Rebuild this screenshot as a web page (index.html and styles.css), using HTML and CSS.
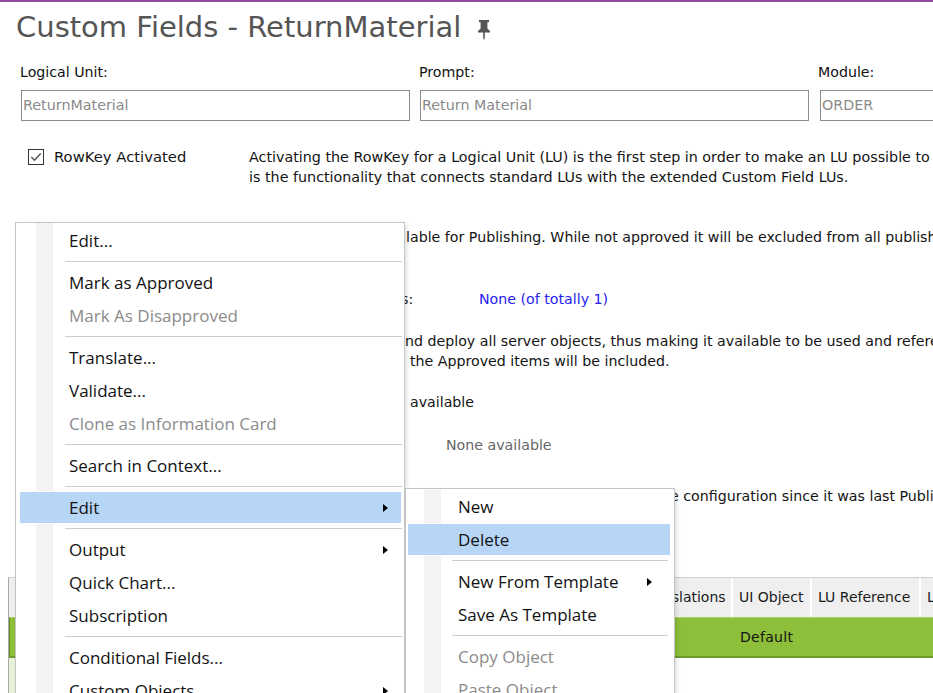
FILE: index.html
```html
<!DOCTYPE html>
<html lang="en">
<head>
<meta charset="utf-8">
<title>Custom Fields - ReturnMaterial</title>
<link rel="stylesheet" href="styles.css">
</head>
<body>
<div class="topline"></div>
<header class="title-row">
  <h1 class="title">Custom Fields - ReturnMaterial</h1>
  <svg class="pin" width="14" height="20" viewBox="0 0 14 20"><path d="M2 0h10v2.2h-1.6v6.3L13 11v1.6H1V11l2.6-2.5V2.2H2z M6.2 12.6h1.6V18L7 20l-0.8-2z" fill="#555"/></svg>
</header>

<div class="fields">
  <div class="field"><label>Logical Unit:</label><div class="input">ReturnMaterial</div></div>
  <div class="field"><label>Prompt:</label><div class="input">Return Material</div></div>
  <div class="field"><label>Module:</label><div class="input input-mod">ORDER</div></div>
</div>

<div class="rowkey">
  <div class="check">
    <svg class="box" width="16" height="16" viewBox="0 0 16 16"><rect x="0.5" y="0.5" width="15" height="15" fill="#fff" stroke="#333"/><polyline points="3.3,8 6.5,11.2 12.7,4.6" fill="none" stroke="#555" stroke-width="1.5"/></svg>
    <span>RowKey Activated</span>
  </div>
  <p class="desc">Activating the RowKey for a Logical Unit (LU) is the first step in order to make an LU possible to extend with Custom Fields. The RowKey<br>is the functionality that connects standard LUs with the extended Custom Field LUs.</p>
</div>

<section class="details">
  <div class="drow r1"><span class="cut w386"><span>An Approved Custom Field is considered stable and therefore avai</span></span><span>lable for Publishing. While not approved it will be excluded from all publishing operations.</span></div>
  <div class="drow r2"><span class="cut w381"><span>Approved Item</span></span><span class="lblend">s:</span><span class="link">None (of totally 1)</span></div>
  <div class="drow r3"><span class="cut w385"><span>Publishing will generate a</span></span><span>nd deploy all server objects, thus making it available to be used and referenced in the application.</span></div>
  <div class="drow"><span class="cut w384"><span>Note that only</span></span><span class="gap6">the Approved items will be included.</span></div>
  <div class="drow r5"><span class="cut w384"><span>None</span></span><span class="gap6">available</span></div>
  <div class="drow r6"><span class="cut w384"><span>Deployed Objects:</span></span><span class="muted">None available</span></div>
  <div class="drow r7"><span class="cut w650"><span>Publish Status: There are changes made to th</span></span><span>e configuration since it was last Published.</span></div>
</section>

<div class="grid">
  <div class="hc c0"></div>
  <div class="hc">Attribute Name</div>
  <div class="hc">Prompt</div>
  <div class="hc">Translations</div>
  <div class="hc">UI Object</div>
  <div class="hc">LU Reference</div>
  <div class="hc">LU Type</div>

  <div class="dc c0 sel"></div>
  <div class="dc"></div>
  <div class="dc"></div>
  <div class="dc"></div>
  <div class="dc">Default</div>
  <div class="dc"></div>
  <div class="dc"></div>

  <div class="fc c0"></div>
  <div class="fc"></div>
  <div class="fc"></div>
  <div class="fc"></div>
  <div class="fc"></div>
  <div class="fc"></div>
  <div class="fc"></div>
</div>

<div class="menu main">
  <div class="mi">Edit...</div>
  <div class="sep"></div>
  <div class="mi">Mark as Approved</div>
  <div class="mi dis">Mark As Disapproved</div>
  <div class="sep"></div>
  <div class="mi">Translate...</div>
  <div class="mi">Validate...</div>
  <div class="mi dis">Clone as Information Card</div>
  <div class="sep"></div>
  <div class="mi">Search in Context...</div>
  <div class="sep"></div>
  <div class="mi hl"><span>Edit</span><span class="arrow"></span></div>
  <div class="sep"></div>
  <div class="mi"><span>Output</span><span class="arrow"></span></div>
  <div class="mi">Quick Chart...</div>
  <div class="mi">Subscription</div>
  <div class="sep"></div>
  <div class="mi">Conditional Fields...</div>
  <div class="mi"><span>Custom Objects</span><span class="arrow"></span></div>
</div>

<div class="menu sub">
  <div class="mi">New</div>
  <div class="mi hl">Delete</div>
  <div class="sep"></div>
  <div class="mi"><span>New From Template</span><span class="arrow"></span></div>
  <div class="mi">Save As Template</div>
  <div class="sep"></div>
  <div class="mi dis">Copy Object</div>
  <div class="mi dis">Paste Object</div>
</div>
</body>
</html>
```

FILE: styles.css
```css
* { box-sizing: border-box; }
html, body { margin: 0; padding: 0; }
body {
  width: 933px;
  height: 693px;
  overflow: hidden;
  position: relative;
  background: #fff;
  font-family: "DejaVu Sans", sans-serif;
  font-size: 14px;
  color: #141414;
}

.topline { height: 2px; background: #8e4a9c; }

.title-row {
  display: flex;
  align-items: flex-start;
  gap: 16px;
  margin: 8px 0 0 16px;
  height: 34px;
}
.title {
  margin: 0;
  font-weight: normal;
  font-size: 29px;
  line-height: 34px;
  color: #555;
  white-space: nowrap;
}
.pin { margin-top: 10px; flex: none; }

.fields {
  display: grid;
  grid-template-columns: 390px 390px 390px;
  column-gap: 9px;
  padding-left: 20px;
  margin-top: 19px;
}
.field label { display: block; height: 18px; line-height: 18px; color: #111; font-size: 14.2px; }
.input {
  margin: 9px 0 0 1px;
  width: 389px;
  height: 31px;
  border: 1px solid #8c8c8c;
  color: #8a8a8a;
  font-size: 14.3px;
  line-height: 29px;
  padding-left: 1px;
  white-space: nowrap;
  overflow: hidden;
}
.input-mod { margin-left: 2px; }

.rowkey { display: flex; margin-top: 26px; }
.check {
  display: flex;
  align-items: flex-start;
  gap: 10px;
  width: 249px;
  padding-left: 28px;
  line-height: 20px;
  font-size: 14.8px;
  flex: none;
}
.check .box { margin-top: 2px; flex: none; }
.desc { margin: 0; line-height: 20px; white-space: nowrap; font-size: 14.3px; }

.details { margin-top: 40px; font-size: 14.2px; }
.drow {
  display: flex;
  height: 20px;
  line-height: 20px;
  white-space: nowrap;
  padding-left: 20px;
}
.cut { flex: none; overflow: hidden; direction: rtl; }
.cut > span { direction: ltr; unicode-bidi: isolate; }
.w386 { width: 386px; }
.w381 { width: 381px; }
.w385 { width: 385px; }
.w384 { width: 384px; }
.w650 { width: 650px; }
.r2 { margin-top: 42px; }
.r3 { margin-top: 22px; }
.r5 { margin-top: 21px; }
.r6 { margin-top: 23px; }
.r7 { margin-top: 31px; }
.lblend { width: 78px; flex: none; }
.link { color: #1f22ee; }
.gap6 { margin-left: 6px; }
.muted { margin-left: 42px; color: #666; }

.grid {
  margin: 71px 0 0 8px;
  display: grid;
  grid-template-columns: 7px 284px 336px 97px 79px 109px 180px;
  grid-template-rows: 39px 41px 40px;
  width: max-content;
  border-left: 1px solid #a8a8a8;
  border-top: 1px solid #cfcfcf;
}
.hc {
  background: #efefef;
  border-right: 2px solid #fff;
  padding-left: 6px;
  line-height: 39px;
  white-space: nowrap;
  overflow: hidden;
  color: #1a1a1a;
}
.hc.c0 { padding: 0; border-right: 1px solid #d6d6d6; }
.dc {
  background: #8dbf3b;
  border-top: 1px solid #a6cf63;
  border-bottom: 2px solid #6d9b2a;
  padding-left: 7px;
  line-height: 38px;
  letter-spacing: 0.3px;
  color: #141414;
}
.dc.c0 { padding: 0; border-right: 1px solid #5f8a24; border-left: 1px solid #5f8a24; }
.fc { background: transparent; }
.fc.c0 { background: #e9f2d6; }

/* context menus */
.menu {
  position: absolute;
  border: 1px solid #c4c4c4;
  padding: 1px 0;
  font-family: "Open Sans", sans-serif;
  font-size: 17px;
  color: #121212;
  box-shadow: 2px 2px 4px rgba(0, 0, 0, 0.12);
}
.main {
  left: 15px;
  top: 222px;
  width: 390px;
  background: linear-gradient(to right, #fff 20px, #f3f3f3 20px, #f3f3f3 37px, #fff 37px);
}
.sub {
  left: 405px;
  top: 488px;
  width: 270px;
  background: linear-gradient(to right, #fff 18px, #f3f3f3 18px, #f3f3f3 35px, #fff 35px);
}
.mi {
  height: 33px;
  line-height: 32px;
  margin: 0 3px 0 4px;
  padding-left: 49px;
  display: flex;
  justify-content: space-between;
  align-items: center;
  white-space: nowrap;
}
.sub .mi { margin: 0 4px 0 2px; padding-left: 50px; }
.mi.dis { color: #8b8b8b; }
.mi.hl {
  background: #b7d6f6;
  box-shadow: inset 0 1px 0 #fff, inset 0 -1px 0 #fff;
}
.sep {
  height: 1px;
  background: #cccccc;
  margin: 4px 2px 4px 49px;
}
.sub .sep { margin: 4px 6px 4px 46px; }
.arrow {
  width: 0;
  height: 0;
  border-left: 5px solid #000;
  border-top: 4.5px solid transparent;
  border-bottom: 4.5px solid transparent;
  margin-right: 13px;
}
.sub .arrow { margin-right: 18px; }
```
